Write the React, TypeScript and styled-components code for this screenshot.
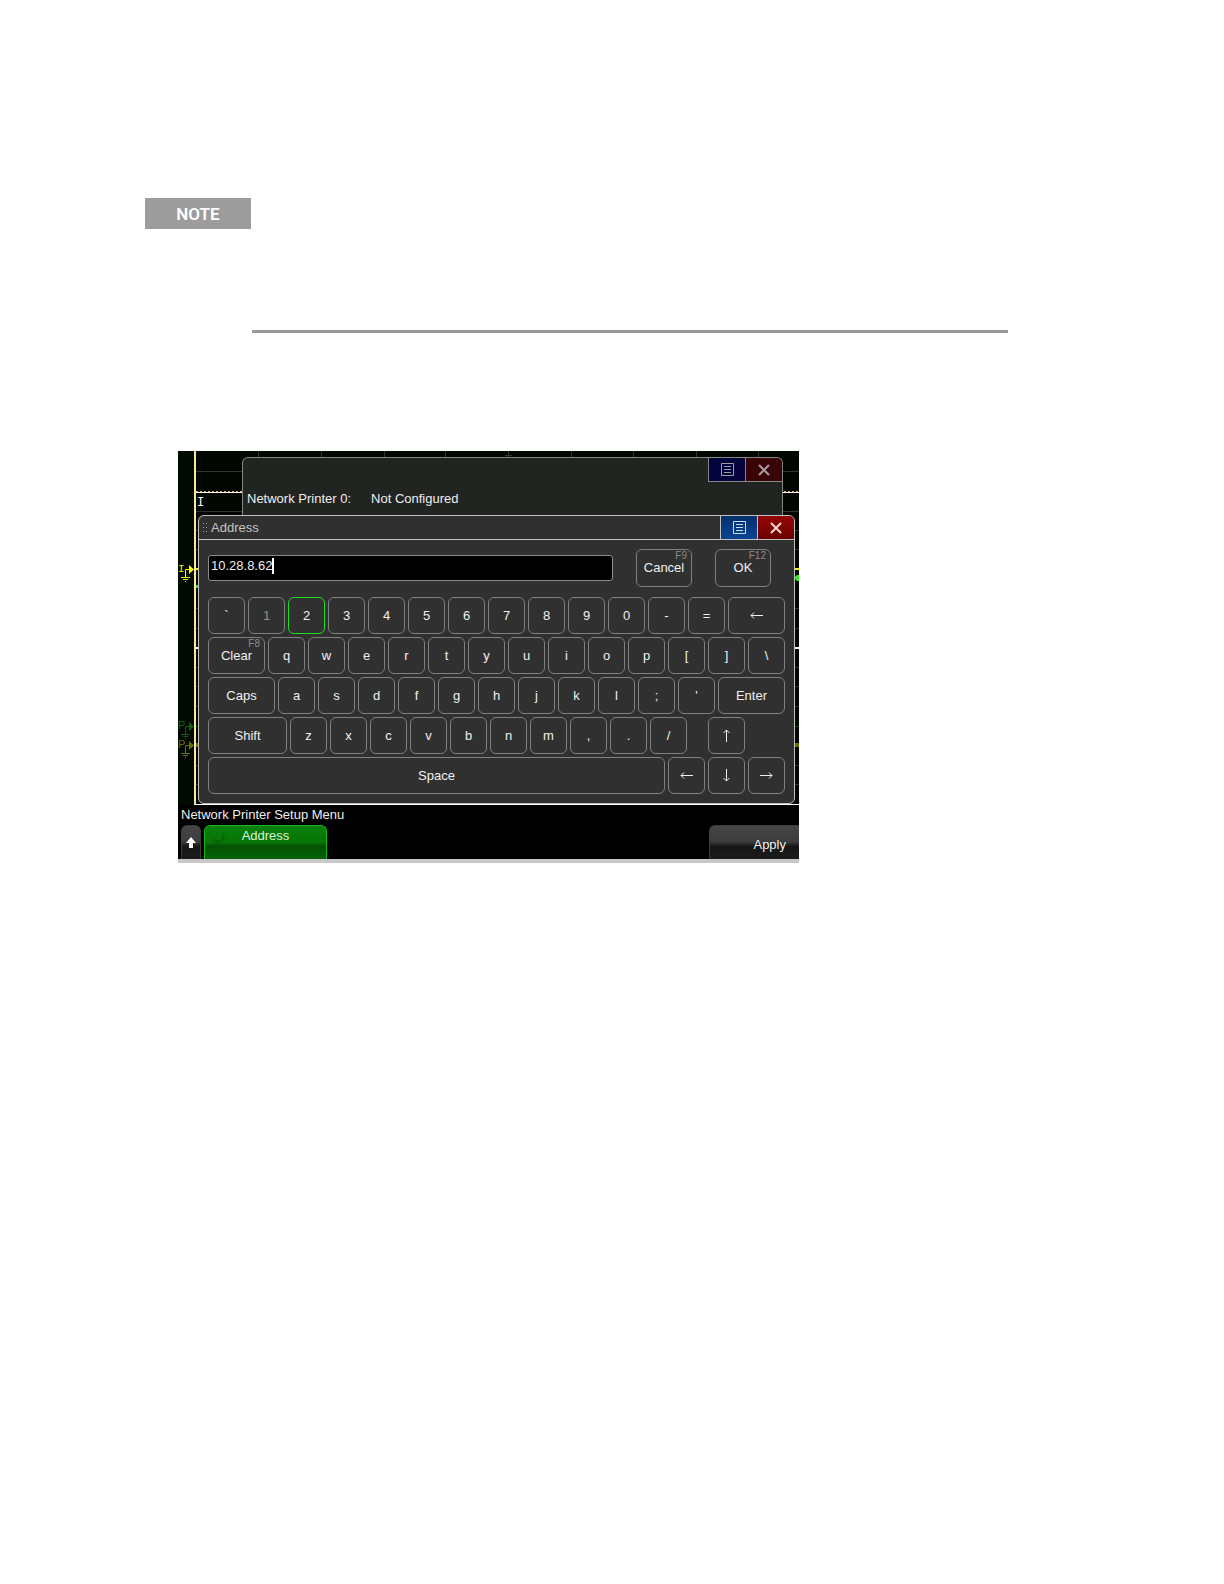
import React, { useState } from "react";
import styled, { createGlobalStyle, css } from "styled-components";

const GlobalStyle = createGlobalStyle`
  *, *::before, *::after { box-sizing: border-box; }
  body {
    margin: 0;
    background: #fff;
    font-family: "Liberation Sans", Arial, sans-serif;
    font-size: 13px;
    line-height: 16px;
  }
  button, input { font: inherit; }
`;

const Page = styled.main`
  min-height: 100vh;
  padding: 198px 216px 64px 145px;
`;

const NoteSection = styled.section`
  margin-bottom: 118px;
`;

const NoteLabel = styled.h2`
  display: flex;
  align-items: center;
  justify-content: center;
  width: 106px;
  height: 31px;
  margin: 0;
  background: #9c9c9c;
  color: #fff;
  font-family: Roboto, "Liberation Sans", sans-serif;
  font-size: 17px;
  font-weight: 600;
  line-height: 24px;
`;

const NoteRule = styled.hr`
  height: 3px;
  margin: 101px 0 0 107px;
  border: 0;
  background: #999;
`;

const Instrument = styled.section`
  max-width: 621px;
  margin-left: 33px;
  overflow: hidden;
  background: #000;
  border-bottom: 4px solid #c8c8c8;
`;

const Display = styled.div`
  position: relative;
  padding: 6px 4px 1px 20px;
  background: #000;
`;

const Scope = styled.svg`
  position: absolute;
  top: 0;
  left: 0;
  width: 100%;
  height: 100%;
`;

const BackWindow = styled.section`
  position: relative;
  height: 58px;
  margin: 0 12px 0 44px;
  border: 1px solid #858885;
  border-bottom: 0;
  border-radius: 6px 6px 0 0;
  background: #222422;
  color: #eee;
  overflow: hidden;
`;

const FrontWindow = styled.section`
  position: relative;
  border: 1px solid #c0c2c0;
  border-radius: 6px;
  background: #303030;
  overflow: hidden;
`;

const TitleBar = styled.header`
  display: flex;
  align-items: stretch;
  height: 24px;
  border-bottom: 1px solid #c0c2c0;
  color: #c4c4c4;
`;

const Grip = styled.svg`
  flex: none;
  align-self: center;
  width: 6px;
  height: 9px;
  margin: 0 2px 0 4px;
`;

const Title = styled.h3`
  flex: 1;
  align-self: center;
  margin: 0;
  font-size: 13px;
  font-weight: 400;
`;

const WindowTools = styled.div`
  display: flex;
  justify-content: flex-end;
  height: 24px;
`;

const WindowButton = styled.button<{ $kind: "menu" | "close"; $dim?: boolean }>`
  display: flex;
  align-items: center;
  justify-content: center;
  width: 37px;
  padding: 0;
  border: 0;
  border-left: 1px solid #c0c2c0;
  color: #e6d8cc;
  background: ${(p) =>
    p.$kind === "menu"
      ? "linear-gradient(#06306c, #0a4494)"
      : "linear-gradient(#940606, #6c0000)"};
  ${(p) => p.$kind === "menu" && css`color: #c2e0f4;`}
  ${(p) =>
    p.$dim &&
    css`
      border-color: #858885;
      border-bottom: 1px solid #858885;
      color: #a49c9c;
      background: ${p.$kind === "menu" ? "#02023c" : "#3a0406"};
    `}
`;

const StatusLine = styled.dl`
  display: flex;
  gap: 20px;
  margin: 9px 0 0 4px;
  dd, dt { margin: 0; }
`;

const Body = styled.form`
  padding: 9px;
`;

const EntryRow = styled.div`
  display: flex;
  align-items: center;
  gap: 23px;
  padding-right: 14px;
  margin-bottom: 10px;
`;

const Entry = styled.div`
  display: flex;
  flex: 1;
  align-items: flex-start;
  height: 26px;
  padding: 2px;
  border: 1px solid #8a8a8a;
  border-radius: 3px;
  background: #000;
`;

const EntryInput = styled.input`
  field-sizing: content;
  padding: 0;
  border: 0;
  outline: 0;
  background: transparent;
  color: #eee;
  caret-color: transparent;
`;

const Caret = styled.span`
  width: 2px;
  height: 16px;
  background: #fff;
`;

const Keyboard = styled.div`
  display: grid;
  gap: 3px;
`;

const KeyRow = styled.div`
  display: flex;
  gap: 3px;
`;

const Key = styled.button<{ $size?: number; $active?: boolean; $faded?: boolean }>`
  position: relative;
  flex: ${(p) => p.$size ?? 37} 1 ${(p) => p.$size ?? 37}px;
  min-width: 0;
  height: 37px;
  padding: 0;
  border: 1px solid #808080;
  border-radius: 6px;
  background: #303030;
  color: #f0f0f0;
  text-align: center;
  ${(p) => p.$faded && css`color: #909090;`}
  ${(p) => p.$active && css`border-color: #1edc1e;`}
`;

const ActionKey = styled(Key)`
  flex: 0 0 56px;
  height: 38px;
`;

const Hint = styled.span`
  position: absolute;
  top: 0;
  right: 4px;
  color: #8a8a8a;
  font-size: 10px;
  line-height: 12px;
`;

const Spacer = styled.span<{ $size: number }>`
  flex: ${(p) => p.$size} 1 ${(p) => p.$size}px;
`;

const Arrow = styled.svg<{ $turn: number }>`
  display: block;
  margin: 0 auto;
  transform: rotate(${(p) => p.$turn}deg);
`;

const MenuName = styled.p`
  margin: 0;
  padding: 2px 3px;
  color: #eee;
`;

const SoftKeys = styled.nav`
  display: flex;
  gap: 3px;
  padding-left: 3px;
  height: 34px;
`;

const SoftKey = styled.button`
  height: 34px;
  padding: 0;
  border: 1px solid #3c3c3c;
  border-bottom: 0;
  border-radius: 6px 6px 0 0;
  background: linear-gradient(#464646, #3c3c3c 48%, #161616 62%, #1c1c1c);
  color: #f0f0f0;
`;

const BackKey = styled(SoftKey)`
  display: flex;
  align-items: center;
  justify-content: center;
  width: 20px;
`;

const AddressKey = styled(SoftKey)`
  position: relative;
  width: 123px;
  padding-bottom: 14px;
  border-color: #1cb41c;
  background: linear-gradient(#078007, #077407 50%, #045004 62%, #056405);
  color: #d8f4d8;
`;

const Knob = styled.svg`
  position: absolute;
  top: 5px;
  left: 7px;
`;

const ApplyKey = styled(SoftKey)`
  width: 90px;
  margin-left: auto;
  padding: 4px 13px 0 0;
  border-right: 0;
  border-top-right-radius: 0;
  text-align: right;
`;

const ListIcon = () => (
  <svg width="13" height="13" viewBox="0 0 13 13" fill="none" stroke="currentColor" aria-hidden="true">
    <path d="M.5 .5h12v12H.5zM3 3.5h7M3 6.5h7M3 9.5h7" />
  </svg>
);

const CloseIcon = () => (
  <svg width="12" height="12" viewBox="0 0 12 12" fill="none" stroke="currentColor" strokeWidth="2" aria-hidden="true">
    <path d="M1 1l10 10M11 1L1 11" />
  </svg>
);

const turns: Record<string, number> = { Backspace: 0, Left: 0, Up: 90, Right: 180, Down: 270 };

const ArrowIcon = ({ name }: { name: string }) => (
  <Arrow $turn={turns[name]} width="13" height="13" viewBox="0 0 13 13" fill="none" stroke="currentColor" aria-hidden="true">
    <path d="M1 6.5h12M4 3.5l-3 3 3 3" />
  </Arrow>
);

const Ground = ({ y, color, label }: { y: number; color: string; label: string }) => (
  <g stroke={color} fill="none">
    <text x="0" y={y + 3} fill={color} stroke="none" fontFamily={label === "I" ? "Liberation Mono" : "Liberation Sans"} fontSize="11">
      {label}
    </text>
    <path d={`M14 ${y + 0.5}H7.5v8M3 ${y + 8.5}h9M5 ${y + 10.5}h5M7 ${y + 12.5}h1`} />
    <path d={`M11 ${y - 4}l5 4.5-5 4.5z`} fill={color} stroke="none" />
  </g>
);

const ticks = [80, 143, 206, 267, 330, 393, 455, 518, 580];
const rows = [20, 60, 79, 98, 157, 177, 216, 235, 255, 314, 333];

const ScopeTrace = () => (
  <Scope aria-hidden="true">
    <rect width="16" height="354" fill="#010a01" />
    <rect x="18" width="603" height="354" fill="#020702" />
    <g fill="#303430">
      {ticks.map((x) => <rect key={x} x={x} y="0" width="1" height="6" />)}
      {rows.map((y) => <rect key={y} x="18" y={y} width="603" height="1" />)}
      <rect x="327" y="4" width="7" height="1" />
    </g>
    <path d="M18 40.5h603" stroke="#e8a040" strokeDasharray="2 2" />
    <rect x="18" y="41" width="603" height="1" fill="#fff" />
    <rect x="18" y="117" width="603" height="2" fill="#f4f410" />
    <rect x="18" y="134" width="3" height="3" fill="#30d820" />
    <circle cx="620" cy="127" r="3" fill="#30ec20" />
    <rect x="18" y="196" width="603" height="2" fill="#fff" />
    <rect x="18" y="275" width="603" height="1" fill="#125012" />
    <rect x="18" y="292" width="603" height="4" fill="#686c08" />
    <rect x="16" width="2" height="354" fill="#ffe49a" />
    <text x="19" y="55" fill="#fff" fontFamily="Liberation Mono" fontSize="12">I</text>
    <Ground y={118} color="#f4f410" label="I" />
    <Ground y={275} color="#145c14" label="P" />
    <Ground y={294} color="#686c08" label="P" />
    <rect x="16" y="353" width="605" height="1" fill="#fff" />
  </Scope>
);

type KeyDef = { label: string; size?: number; hint?: string; gap?: number; name?: string };

const chars = (text: string): KeyDef[] => [...text].map((label) => ({ label }));

const layout: KeyDef[][] = [
  [...chars("`1234567890-="), { label: "", size: 57, name: "Backspace" }],
  [{ label: "Clear", size: 57, hint: "F8" }, ...chars("qwertyuiop[]\\")],
  [{ label: "Caps", size: 67 }, ...chars("asdfghjkl;'"), { label: "Enter", size: 67 }],
  [
    { label: "Shift", size: 79 },
    ...chars("zxcvbnm,./"),
    { label: "", gap: 15 },
    { label: "", name: "Up" },
    { label: "", gap: 37 },
  ],
  [
    { label: "Space", size: 457 },
    { label: "", name: "Left" },
    { label: "", name: "Down" },
    { label: "", name: "Right" },
  ],
];

export default function App() {
  const [address, setAddress] = useState("10.28.8.62");
  const [last, setLast] = useState("2");

  const press = (key: KeyDef) => {
    setLast(key.name ?? key.label);
    if (key.name === "Backspace") setAddress((a) => a.slice(0, -1));
    else if (key.label === "Clear") setAddress("");
    else if (key.label.length === 1) setAddress((a) => a + key.label);
  };

  return (
    <>
      <GlobalStyle />
      <Page>
        <NoteSection>
          <NoteLabel>NOTE</NoteLabel>
          <NoteRule />
        </NoteSection>
        <Instrument>
          <Display>
            <ScopeTrace />
            <BackWindow>
              <WindowTools>
                <WindowButton $kind="menu" $dim aria-label="Printer options"><ListIcon /></WindowButton>
                <WindowButton $kind="close" $dim aria-label="Close printer"><CloseIcon /></WindowButton>
              </WindowTools>
              <StatusLine>
                <dt>Network Printer 0:</dt>
                <dd>Not Configured</dd>
              </StatusLine>
            </BackWindow>
            <FrontWindow>
              <TitleBar>
                <Grip viewBox="0 0 6 9" fill="#a0a0a0" aria-hidden="true">
                  <path d="M0 0h1v1H0zM3 0h1v1H3zM0 4h1v1H0zM3 4h1v1H3zM0 8h1v1H0zM3 8h1v1H3z" />
                </Grip>
                <Title>Address</Title>
                <WindowButton $kind="menu" aria-label="Keyboard options"><ListIcon /></WindowButton>
                <WindowButton $kind="close" aria-label="Close keyboard"><CloseIcon /></WindowButton>
              </TitleBar>
              <Body onSubmit={(e) => e.preventDefault()}>
                <EntryRow>
                  <Entry>
                    <EntryInput aria-label="Address" value={address} onChange={(e) => setAddress(e.target.value)} />
                    <Caret />
                  </Entry>
                  <ActionKey type="button">Cancel<Hint>F9</Hint></ActionKey>
                  <ActionKey type="submit">OK<Hint>F12</Hint></ActionKey>
                </EntryRow>
                <Keyboard>
                  {layout.map((row, r) => (
                    <KeyRow key={r}>
                      {row.map((key, i) =>
                        key.gap ? (
                          <Spacer key={i} $size={key.gap} />
                        ) : (
                          <Key
                            key={i}
                            type="button"
                            $size={key.size}
                            $active={(key.name ?? key.label) === last}
                            $faded={key.label === "1"}
                            aria-label={key.name}
                            onClick={() => press(key)}
                          >
                            {key.name ? <ArrowIcon name={key.name} /> : key.label}
                            {key.hint && <Hint>{key.hint}</Hint>}
                          </Key>
                        )
                      )}
                    </KeyRow>
                  ))}
                </Keyboard>
              </Body>
            </FrontWindow>
          </Display>
          <MenuName>Network Printer Setup Menu</MenuName>
          <SoftKeys>
            <BackKey aria-label="Back">
              <svg width="10" height="11" viewBox="0 0 10 11" fill="#fff" aria-hidden="true">
                <path d="M5 0l5 6H7v5H3V6H0z" />
              </svg>
            </BackKey>
            <AddressKey>
              <Knob width="13" height="13" viewBox="0 0 13 13" fill="none" stroke="#086208" strokeWidth="2" aria-hidden="true">
                <path d="M11 3a5 5 0 1 1-9 5" />
              </Knob>
              Address
            </AddressKey>
            <ApplyKey>Apply</ApplyKey>
          </SoftKeys>
        </Instrument>
      </Page>
    </>
  );
}
